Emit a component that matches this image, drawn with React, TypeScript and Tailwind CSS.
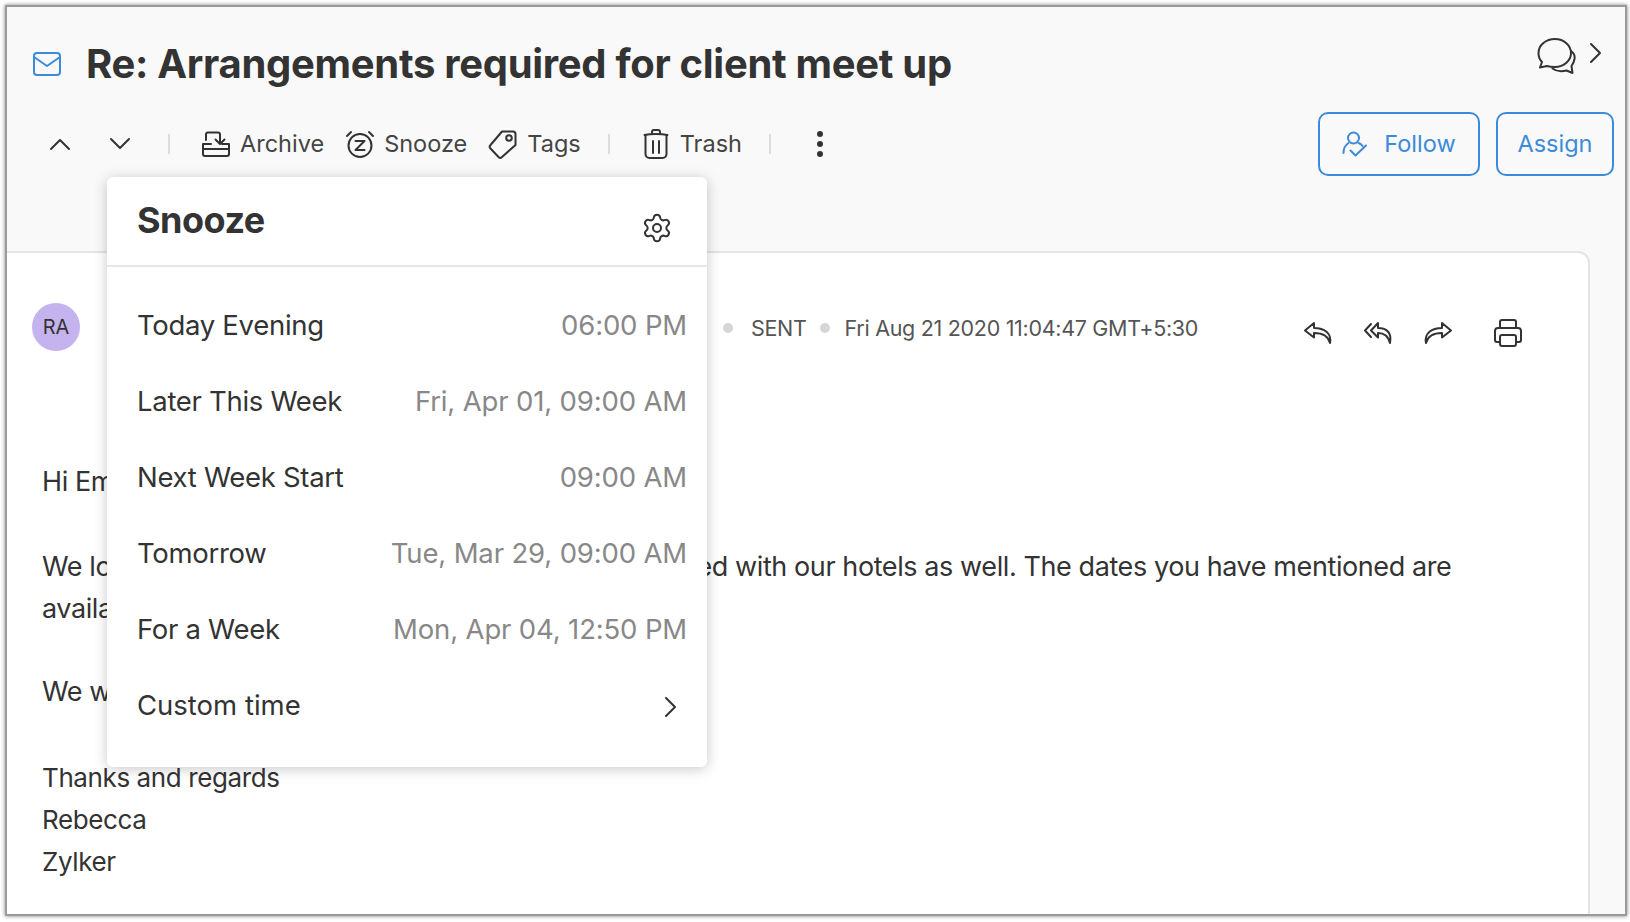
import { Settings } from 'lucide-react'

const snoozeOptions = [
  { label: 'Today Evening', time: '06:00 PM' },
  { label: 'Later This Week', time: 'Fri, Apr 01, 09:00 AM' },
  { label: 'Next Week Start', time: '09:00 AM' },
  { label: 'Tomorrow', time: 'Tue, Mar 29, 09:00 AM' },
  { label: 'For a Week', time: 'Mon, Apr 04, 12:50 PM' },
]

function MailIcon() {
  return (
    <svg width="30" height="26" viewBox="0 0 30 26" fill="none" stroke="#3b8bd8" strokeWidth="2" strokeLinejoin="round" strokeLinecap="round">
      <rect x="2" y="2" width="26" height="22" rx="3" />
      <path d="M2 6l13 9 13-9" />
    </svg>
  )
}

function Chevron({ d, w = 22, h = 14 }: { d: string; w?: number; h?: number }) {
  return (
    <svg width={w} height={h} viewBox={`0 0 ${w} ${h}`} fill="none" stroke="#333" strokeWidth="2" strokeLinecap="round" strokeLinejoin="round">
      <path d={d} />
    </svg>
  )
}

function ArchiveIcon() {
  return (
    <svg width="30" height="26" viewBox="0 0 30 26" fill="none" stroke="#333" strokeWidth="2" strokeLinecap="round" strokeLinejoin="round">
      <path d="M2 13h8M21 13h7M2 13v10a2 2 0 002 2h22a2 2 0 002-2V13M2 18h26" />
      <path d="M5 9V3.500a2 2 0 012-2h10a2 2 0 012 2v9M14.500 8.500l4.500 4.500 4.500-4.500" />
    </svg>
  )
}

function SnoozeIcon() {
  return (
    <svg width="30" height="28" viewBox="0 0 30 28" fill="none" stroke="#333" strokeWidth="2" strokeLinecap="round" strokeLinejoin="round">
      <circle cx="15" cy="15.500" r="11.500" />
      <path d="M2 6l4-4M28 6l-4-4M10.500 11h9l-9 9h9" />
    </svg>
  )
}

function TagIcon() {
  return (
    <svg width="30" height="30" viewBox="0 0 30 30" fill="none" stroke="#333" strokeWidth="2" strokeLinecap="round" strokeLinejoin="round">
      <path d="M14 2.500h11a2.500 2.500 0 012.500 2.500v11L14 28a2.500 2.500 0 01-3.500 0l-8-8.500a2.500 2.500 0 010-3.500z" />
      <circle cx="21" cy="9" r="2.800" />
    </svg>
  )
}

function TrashIcon() {
  return (
    <svg width="26" height="30" viewBox="0 0 26 30" fill="none" stroke="#333" strokeWidth="2" strokeLinecap="round" strokeLinejoin="round">
      <path d="M1.500 6c6-1.500 17-1.500 23 0M9 5V3a2 2 0 012-2h4a2 2 0 012 2v2" />
      <path d="M2.500 6v19a4 4 0 004 4h13a4 4 0 004-4V6M10 12v12M16 12v12" />
    </svg>
  )
}

function FollowIcon() {
  return (
    <svg width="26" height="28" viewBox="0 0 26 28" fill="none" stroke="#3b8bd8" strokeWidth="2" strokeLinecap="round" strokeLinejoin="round">
      <circle cx="11.500" cy="8" r="5.500" />
      <path d="M6.500 13C3.500 15 1.500 19 1.500 23M16.500 13c2 .7 3 1.500 4 3M8.500 20.500l5 5 10.500-10" />
    </svg>
  )
}

function ChatIcon() {
  return (
    <svg width="40" height="40" viewBox="0 0 40 40" fill="none" stroke="#333" strokeWidth="2" strokeLinecap="round" strokeLinejoin="round">
      <path d="M19 2C10 2 2.500 8 2.500 16c0 4 1.500 7 3.500 9l-2 5.500 7-1.500c3 1 5 1 8 1 9 0 16-6.500 16-14S28 2 19 2z" />
      <path d="M35 14c3 2 4 5 3.500 8-.5 3-1.500 5-3 7l1 7-6-2.500c-4 1-10 1-14-2" />
    </svg>
  )
}

function ReplyIcon() {
  return (
    <svg width="30" height="24" viewBox="0 0 30 24" fill="none" stroke="#333" strokeWidth="2" strokeLinecap="round" strokeLinejoin="round">
      <path d="M11 2L2 9.500l9 7v-4.500c7 0 14 2 16 10 2-10-6-15-16-15z" />
    </svg>
  )
}

function ReplyAllIcon() {
  return (
    <svg width="30" height="24" viewBox="0 0 30 24" fill="none" stroke="#333" strokeWidth="2" strokeLinecap="round" strokeLinejoin="round">
      <path d="M8 3L2 9.500l6 6.500" />
      <path d="M15 2L8 9.500l7 7v-4.500c5 0 10 2 12 10 2-10-3-15-12-15z" />
    </svg>
  )
}

function ForwardIcon() {
  return (
    <svg width="30" height="24" viewBox="0 0 30 24" fill="none" stroke="#333" strokeWidth="2" strokeLinecap="round" strokeLinejoin="round">
      <path d="M19 2l9 7.500-9 7v-4.500c-7 0-14 2-16 10-2-10 6-15 16-15z" />
    </svg>
  )
}

function PrintIcon() {
  return (
    <svg width="30" height="30" viewBox="0 0 30 30" fill="none" stroke="#333" strokeWidth="2" strokeLinecap="round" strokeLinejoin="round">
      <path d="M7 10V4a2 2 0 012-2h12a2 2 0 012 2v6" />
      <path d="M7 24H4a2 2 0 01-2-2v-9a3 3 0 013-3h20a3 3 0 013 3v9a2 2 0 01-2 2h-3" />
      <rect x="7" y="17" width="16" height="11" rx="2" />
    </svg>
  )
}

function Divider() {
  return <span className="block h-[20px] w-[2px] bg-[#dcdcdc]" />
}

export default function App() {
  return (
    <div className="h-[922px] w-[1630px] bg-white p-[5px] font-[Inter,sans-serif] text-[#333]">
      <div className="relative flex h-[911px] w-[1622px] flex-col overflow-hidden border-2 border-[#9a9a9a] bg-[#f9f9f9] shadow-[0_0_4px_rgba(0,0,0,0.5)]">
        <header className="flex h-[244px] flex-col">
          <div className="flex h-[105px] items-start pl-[25px] pr-[22px]">
            <div className="mt-[44px]">
              <MailIcon />
            </div>
            <h1 className="ml-[24px] mt-[32px] text-[40px] leading-[50px] font-bold tracking-[-0.3px] text-[#333]">
              Re: Arrangements required for client meet up
            </h1>
            <div className="ml-auto mt-[30px] flex items-start gap-[13px]">
              <ChatIcon />
              <div className="mt-[5px]">
                <Chevron d="M2 2l9 9-9 9" w={14} h={22} />
              </div>
            </div>
          </div>
          <div className="flex h-[64px] items-center pr-[11px] text-[23.500px] text-[#444]">
            <div className="ml-[42px] flex w-[119px] items-center gap-[38px]">
              <Chevron d="M2 12L11 3l9 9" />
              <Chevron d="M2 2l9 9 9-9" />
            </div>
            <Divider />
            <div className="ml-[31px] flex items-center gap-[9px]">
              <ArchiveIcon />
              <span>Archive</span>
            </div>
            <div className="ml-[21px] flex items-center gap-[9px]">
              <SnoozeIcon />
              <span>Snooze</span>
            </div>
            <div className="ml-[21px] flex items-center gap-[9px]">
              <TagIcon />
              <span>Tags</span>
            </div>
            <div className="ml-[27px]">
              <Divider />
            </div>
            <div className="ml-[33px] flex items-center gap-[11px]">
              <TrashIcon />
              <span>Trash</span>
            </div>
            <div className="ml-[27px]">
              <Divider />
            </div>
            <div className="ml-[46px] flex flex-col gap-[4px]">
              <span className="h-[6px] w-[6px] rounded-full bg-[#333]" />
              <span className="h-[6px] w-[6px] rounded-full bg-[#333]" />
              <span className="h-[6px] w-[6px] rounded-full bg-[#333]" />
            </div>
            <button className="ml-auto flex h-[64px] w-[162px] items-center justify-center gap-[16px] rounded-[10px] border-2 border-[#3b8bd8] text-[#3b8bd8]">
              <FollowIcon />
              <span>Follow</span>
            </button>
            <button className="ml-[16px] h-[64px] w-[118px] rounded-[10px] border-2 border-[#3b8bd8] text-[#3b8bd8]">
              Assign
            </button>
          </div>
        </header>

        <main className="mr-[35px] flex-1 rounded-tr-[12px] border-t-2 border-r-2 border-[#e4e4e4] bg-white">
          <div className="flex h-[112px] items-start pl-[25px] pt-[50px]">
            <div className="flex h-[48px] w-[48px] items-center justify-center rounded-full bg-[#c4b3ee] text-[20px] text-[#333]">
              RA
            </div>
            <div className="mt-[9px] flex w-[1150px] items-center text-[21.500px] text-[#555]">
              <span className="w-[643px] truncate pl-[34px] text-[#333]">Rebecca Anderson</span>
              <span className="h-[10px] w-[10px] rounded-full bg-[#d6d6d6]" />
              <span className="ml-[18px] tracking-[-0.3px]">SENT</span>
              <span className="ml-[13px] h-[10px] w-[10px] rounded-full bg-[#d6d6d6]" />
              <span className="ml-[15px] tracking-[-0.3px]">Fri Aug 21 2020 11:04:47 GMT+5:30</span>
            </div>
            <div className="mt-[15px] flex items-center gap-[30px] pl-[73px]">
              <ReplyIcon />
              <ReplyAllIcon />
              <ForwardIcon />
              <div className="ml-[10px]">
                <PrintIcon />
              </div>
            </div>
          </div>
          <div className="pl-[35px] pt-[96px] leading-[42px] text-[#333]">
            <p className="text-[27px] tracking-[-0.41px]">Hi Emily,</p>
            <p className="mt-[43px] text-[27px] tracking-[-0.41px]">
              We looked over your request and it has been confirmed with our hotels as well. The dates you have mentioned are
              <br />
              available for booking.
            </p>
            <p className="mt-[41px] text-[27px] tracking-[-0.41px]">We will be waiting for you.</p>
            <div className="mt-[44px] text-[26px] tracking-[-0.4px]">
              <p>Thanks and regards</p>
              <p>Rebecca</p>
              <p>Zylker</p>
            </div>
          </div>
        </main>

        <div className="absolute left-[100px] top-[170px] h-[590px] w-[600px] rounded-[6px] bg-white shadow-[0_2px_14px_rgba(0,0,0,0.22)]">
          <div className="flex h-[90px] items-start justify-between border-b-2 border-[#e6e6e6] pl-[30px] pr-[34px]">
            <h2 className="mt-[20px] text-[36px] leading-[46px] font-bold tracking-[-0.5px]">Snooze</h2>
            <Settings className="mt-[35px] h-[32px] w-[32px]" strokeWidth={1.500} />
          </div>
          <ul className="pt-[20px] text-[27.500px] leading-[76px] tracking-[-0.3px]">
            {snoozeOptions.map(option => (
              <li key={option.label} className="flex justify-between pl-[30px] pr-[20px]">
                <span>{option.label}</span>
                <span className="tracking-[-0.15px] text-[#888]">{option.time}</span>
              </li>
            ))}
            <li className="flex items-center justify-between pl-[30px] pr-[29px]">
              <span className="tracking-[0px]">Custom time</span>
              <div className="mt-[4px]">
                <Chevron d="M2 2l9 9-9 9" w={14} h={22} />
              </div>
            </li>
          </ul>
        </div>
      </div>
    </div>
  )
}
